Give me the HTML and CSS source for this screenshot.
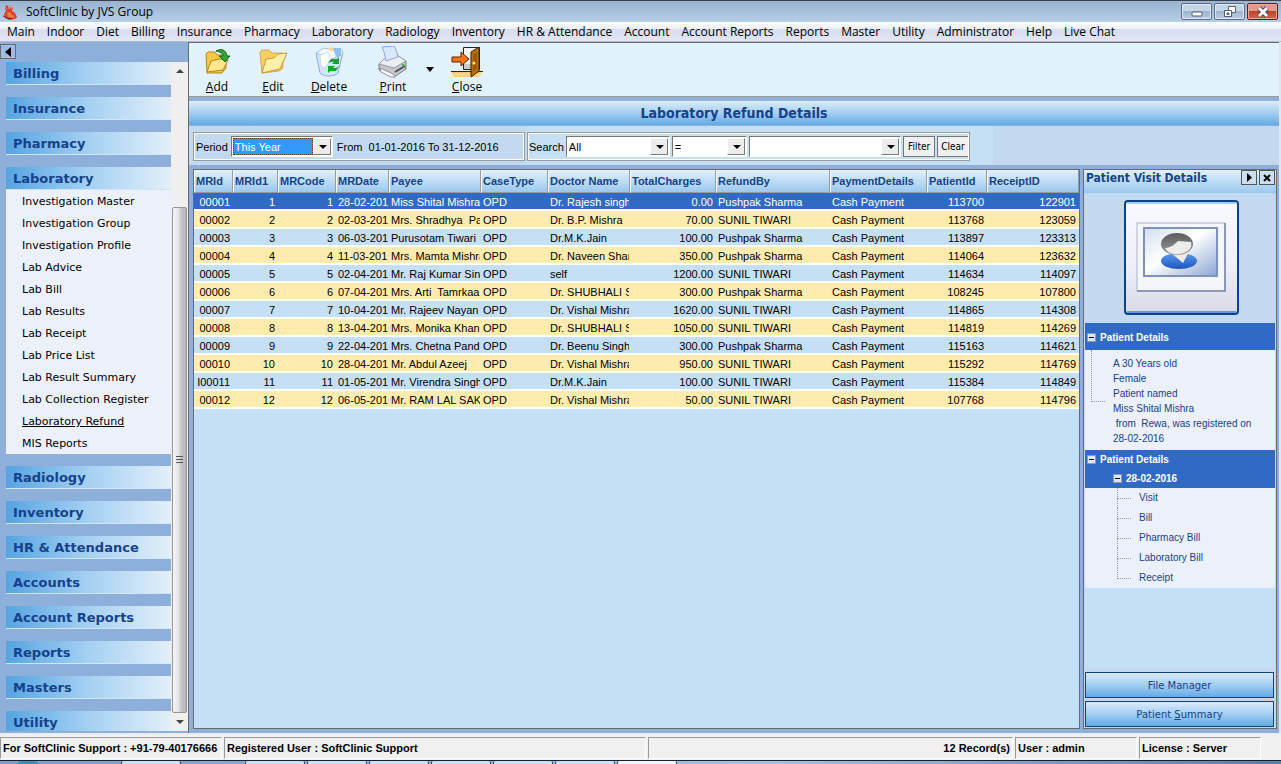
FILE: index.html
```
<!DOCTYPE html>
<html lang="en">
<head>
  <meta charset="UTF-8" />
  <title>SoftClinic by JVS Group</title>
  <link rel="stylesheet" href="styles.css">
</head>
<body>
  <header class="titlebar">
    <svg class="app-icon" width="16" height="16" viewBox="0 0 16 16">
      <path d="M4 1l2 1 1 3 2-2 2 1-1 3 3 2 2 4-2 2-6 1-4-2-1-4 2-3-1-3z" fill="#d8432a" />
      <path d="M3 3l2 2M8 1l-1 4M11 2l-2 3" stroke="#e98a72" stroke-width="1" />
      <path d="M5 9l3-1 2 3 3 1-2 2-5-1z" fill="#f47a4c" />
      <path d="M1 12l4 2 5 1" stroke="#8d1d16" fill="none" />
    </svg>
    <span class="app-name">SoftClinic by JVS Group</span>
    <div class="window-buttons">
      <button type="button" aria-label="Minimize"><svg width="12" height="12"><rect x="1" y="6" width="10" height="4" rx="1" fill="#fff" stroke="#535c6b" /></svg></button>
      <button type="button" aria-label="Restore"><svg width="12" height="12"><path d="M4.500 .5h7v6h-7z" fill="#fff" stroke="#535c6b" /><path d="M.5 4.500h7v6h-7z" fill="#fff" stroke="#535c6b" /><path d="M3 7h2v1.500h-2z" fill="#a9c0dc" stroke="#535c6b" /></svg></button>
      <button type="button" class="win-close" aria-label="Close window"><svg width="12" height="12"><path d="M2 2l8 8M10 2l-8 8" stroke="#5b3a3f" stroke-width="5" /><path d="M2 2l8 8M10 2l-8 8" stroke="#fff" stroke-width="3" /></svg></button>
    </div>
  </header>

  <nav class="menubar">
    <a href="#">Main</a>
    <a href="#">Indoor</a>
    <a href="#">Diet</a>
    <a href="#">Billing</a>
    <a href="#">Insurance</a>
    <a href="#">Pharmacy</a>
    <a href="#">Laboratory</a>
    <a href="#">Radiology</a>
    <a href="#">Inventory</a>
    <a href="#">HR &amp; Attendance</a>
    <a href="#">Account</a>
    <a href="#">Account Reports</a>
    <a href="#">Reports</a>
    <a href="#">Master</a>
    <a href="#">Utility</a>
    <a href="#">Administrator</a>
    <a href="#">Help</a>
    <a href="#">Live Chat</a>
  </nav>

  <div class="workspace">
    <aside class="sidebar">
      <button type="button" class="collapse" aria-label="Collapse sidebar"><svg width="6" height="10"><path d="M6 0v10L0 5z" /></svg></button>
      <div class="sidebar-body">
        <nav class="groups">
          <a class="group" href="#">Billing</a>
          <a class="group" href="#">Insurance</a>
          <a class="group" href="#">Pharmacy</a>
          <div class="group-open">
            <a class="group" href="#">Laboratory</a>
            <ul>
              <li><a href="#">Investigation Master</a></li>
              <li><a href="#">Investigation Group</a></li>
              <li><a href="#">Investigation Profile</a></li>
              <li><a href="#">Lab Advice</a></li>
              <li><a href="#">Lab Bill</a></li>
              <li><a href="#">Lab Results</a></li>
              <li><a href="#">Lab Receipt</a></li>
              <li><a href="#">Lab Price List</a></li>
              <li><a href="#">Lab Result Summary</a></li>
              <li><a href="#">Lab Collection Register</a></li>
              <li><a class="active" href="#">Laboratory Refund</a></li>
              <li><a href="#">MIS Reports</a></li>
            </ul>
          </div>
          <a class="group" href="#">Radiology</a>
          <a class="group" href="#">Inventory</a>
          <a class="group" href="#">HR &amp; Attendance</a>
          <a class="group" href="#">Accounts</a>
          <a class="group" href="#">Account Reports</a>
          <a class="group" href="#">Reports</a>
          <a class="group" href="#">Masters</a>
          <a class="group" href="#">Utility</a>
        </nav>
        <div class="scrollbar">
          <svg class="scroll-arrow" width="8" height="4"><path d="M0 4h8L4 0z" /></svg>
          <div class="track">
            <div class="thumb"><span></span><span></span><span></span></div>
          </div>
          <svg class="scroll-arrow" width="8" height="4"><path d="M0 0h8L4 4z" /></svg>
        </div>
      </div>
    </aside>

    <main>
      <div class="toolbar">
        <button type="button">
          <svg width="32" height="32" viewBox="0 0 32 32">
            <path d="M5 8l2-2h7l2 3h8l1 3v10l-4 5-15 0z" fill="#f5c744" stroke="#b58718" />
            <path d="M6 26l4-11 8-2 9 1-5 10z" fill="#ffe88c" stroke="#b58718" />
            <path d="M15 5c6-3 10-1 11 5h3l-5 6-6-6h4c0-3-3-4-7-5z" fill="#35a535" stroke="#17691a" />
          </svg>
          <span><u>A</u>dd</span>
        </button>
        <button type="button">
          <svg width="32" height="32" viewBox="0 0 32 32">
            <path d="M3 6l2-2h7l3 3h10l1 3v12l-4 3-17 2z" fill="#f9d063" stroke="#d9a066" />
            <path d="M5 27l4-14 8-1 4-4 9-1-7 16z" fill="#fff0a8" stroke="#c99a2e" />
          </svg>
          <span><u>E</u>dit</span>
        </button>
        <button type="button">
          <svg width="32" height="32" viewBox="0 0 32 32">
            <path d="M3 7l4 20c4 4 14 4 18 0l5-21z" fill="#cfe6fb" stroke="#84aede" />
            <path d="M3 7l8-5 9 2 9 0 1 4-11 5z" fill="#f4f9ff" stroke="#9bc4ee" />
            <path d="M20 2l8 0v8l-5 1z" fill="#8fc0f4" />
            <path d="M14 2l7-1-2 5z" fill="#ffd98a" />
            <path d="M7 9l8-3 3 7-6 9-4-2z" fill="#fff" stroke="#c7d9ee" />
            <path d="M15 17l3-4h6l2-2v7h-7l2-2h-3zM26 20l-3 5h-6l-2 2v-7h7l-2 2h3z" fill="#1f9c3b" />
          </svg>
          <span><u>D</u>elete</span>
        </button>
        <button type="button" class="print">
          <svg width="32" height="32" viewBox="0 0 32 32">
            <path d="M2 18l4-4 14-4 9 5v8l-12 8-15-7z" fill="#c4c7cd" stroke="#777c85" />
            <path d="M2 18l5-5 13-4 9 6-12 7z" fill="#eceef1" stroke="#979ba3" />
            <path d="M5 1l12-1c2 3 3 7 4 11l-12 4c-1-6-2-10-4-14z" fill="#dbe8ff" stroke="#88a7df" />
            <path d="M3 22l13 6 2 3-4 0-10-5z" fill="#fff" stroke="#8b9098" />
            <path d="M18 26l10-6" stroke="#4c5058" stroke-width="2" />
            <path d="M25 18h2v3h-2z" fill="#40b040" />
          </svg>
          <span><u>P</u>rint</span>
        </button>
        <button type="button" class="drop" aria-label="Print options"><svg width="8" height="5"><path d="M0 0h8L4 5z" /></svg></button>
        <button type="button">
          <svg width="32" height="32" viewBox="0 0 32 32">
            <path d="M0 25h32l-4 6h-26z" fill="#ffd98e" />
            <path d="M2 27h28M4 30h24" stroke="#f2a950" stroke-dasharray="2 2" />
            <path d="M0 25.500h32" stroke="#222" />
            <path d="M12.500 1.500h16v22h-16z" fill="#f4f4f4" stroke="#222" />
            <path d="M13 18h7v5h-7z" fill="#c9c9c9" />
            <path d="M20 6l8-5v24l-8 6z" fill="#b9720f" stroke="#3b2504" />
            <path d="M22 8l4-2v17l-4 3z" fill="#9a5a08" />
            <circle cx="23" cy="17" r="1.500" fill="#ffe27a" />
            <path d="M1 11h9V6l8 7-8 7v-4H1z" fill="#ff7414" stroke="#5b2500" />
          </svg>
          <span><u>C</u>lose</span>
        </button>
      </div>

      <h1>Laboratory Refund Details</h1>

      <form class="filters">
        <div class="filter-box period">
          <label for="period">Period</label>
          <span class="combo"><select id="period"><option>This Year</option></select></span>
          <span class="range">From&nbsp; 01-01-2016 To 31-12-2016</span>
        </div>
        <div class="filter-area">
          <div class="filter-box search">
            <label for="field">Search</label>
            <span class="combo field"><select id="field"><option>All</option></select></span>
            <span class="combo operator"><select aria-label="Operator"><option>=</option></select></span>
            <span class="combo value"><select aria-label="Value"><option></option></select></span>
            <button type="button">Filter</button>
            <button type="button">Clear</button>
          </div>
        </div>
      </form>

      <div class="content">
        <section class="grid">
          <table>
            <colgroup>
              <col class="c-id"><col class="c-id1"><col class="c-code"><col class="c-date"><col class="c-payee"><col class="c-case"><col class="c-doctor"><col class="c-total"><col class="c-refund"><col class="c-payment"><col class="c-patient"><col>
            </colgroup>
            <thead>
              <tr><th>MRId</th><th>MRId1</th><th>MRCode</th><th>MRDate</th><th>Payee</th><th>CaseType</th><th>Doctor Name</th><th>TotalCharges</th><th>RefundBy</th><th>PaymentDetails</th><th>PatientId</th><th>ReceiptID</th></tr>
            </thead>
            <tbody>
              <tr class="selected"><td class="num">00001</td><td class="num">1</td><td class="num">1</td><td>28-02-201</td><td>Miss Shital Mishra</td><td>OPD</td><td>Dr. Rajesh singh</td><td class="num">0.00</td><td>Pushpak Sharma</td><td>Cash Payment</td><td class="num">113700</td><td class="num">122901</td></tr>
              <tr><td class="num">00002</td><td class="num">2</td><td class="num">2</td><td>02-03-201</td><td>Mrs. Shradhya&nbsp; Pa</td><td>OPD</td><td>Dr. B.P. Mishra</td><td class="num">70.00</td><td>SUNIL TIWARI</td><td>Cash Payment</td><td class="num">113768</td><td class="num">123059</td></tr>
              <tr><td class="num">00003</td><td class="num">3</td><td class="num">3</td><td>06-03-201</td><td>Purusotam Tiwari</td><td>OPD</td><td>Dr.M.K.Jain</td><td class="num">100.00</td><td>Pushpak Sharma</td><td>Cash Payment</td><td class="num">113897</td><td class="num">123313</td></tr>
              <tr><td class="num">00004</td><td class="num">4</td><td class="num">4</td><td>11-03-201</td><td>Mrs. Mamta Mishra</td><td>OPD</td><td>Dr. Naveen Shar</td><td class="num">350.00</td><td>Pushpak Sharma</td><td>Cash Payment</td><td class="num">114064</td><td class="num">123632</td></tr>
              <tr><td class="num">00005</td><td class="num">5</td><td class="num">5</td><td>02-04-201</td><td>Mr. Raj Kumar Sing</td><td>OPD</td><td>self</td><td class="num">1200.00</td><td>SUNIL TIWARI</td><td>Cash Payment</td><td class="num">114634</td><td class="num">114097</td></tr>
              <tr><td class="num">00006</td><td class="num">6</td><td class="num">6</td><td>07-04-201</td><td>Mrs. Arti&nbsp; Tamrkaa</td><td>OPD</td><td>Dr. SHUBHALI S</td><td class="num">300.00</td><td>Pushpak Sharma</td><td>Cash Payment</td><td class="num">108245</td><td class="num">107800</td></tr>
              <tr><td class="num">00007</td><td class="num">7</td><td class="num">7</td><td>10-04-201</td><td>Mr. Rajeev Nayan</td><td>OPD</td><td>Dr. Vishal Mishra</td><td class="num">1620.00</td><td>SUNIL TIWARI</td><td>Cash Payment</td><td class="num">114865</td><td class="num">114308</td></tr>
              <tr><td class="num">00008</td><td class="num">8</td><td class="num">8</td><td>13-04-201</td><td>Mrs. Monika Khan</td><td>OPD</td><td>Dr. SHUBHALI S</td><td class="num">1050.00</td><td>SUNIL TIWARI</td><td>Cash Payment</td><td class="num">114819</td><td class="num">114269</td></tr>
              <tr><td class="num">00009</td><td class="num">9</td><td class="num">9</td><td>22-04-201</td><td>Mrs. Chetna Pand</td><td>OPD</td><td>Dr. Beenu Singh</td><td class="num">300.00</td><td>Pushpak Sharma</td><td>Cash Payment</td><td class="num">115163</td><td class="num">114621</td></tr>
              <tr><td class="num">00010</td><td class="num">10</td><td class="num">10</td><td>28-04-201</td><td>Mr. Abdul Azeej</td><td>OPD</td><td>Dr. Vishal Mishra</td><td class="num">950.00</td><td>SUNIL TIWARI</td><td>Cash Payment</td><td class="num">115292</td><td class="num">114769</td></tr>
              <tr><td class="num">I00011</td><td class="num">11</td><td class="num">11</td><td>01-05-201</td><td>Mr. Virendra Singh</td><td>OPD</td><td>Dr.M.K.Jain</td><td class="num">100.00</td><td>SUNIL TIWARI</td><td>Cash Payment</td><td class="num">115384</td><td class="num">114849</td></tr>
              <tr><td class="num">00012</td><td class="num">12</td><td class="num">12</td><td>06-05-201</td><td>Mr. RAM LAL SAK</td><td>OPD</td><td>Dr. Vishal Mishra</td><td class="num">50.00</td><td>SUNIL TIWARI</td><td>Cash Payment</td><td class="num">107768</td><td class="num">114796</td></tr>
            </tbody>
          </table>
        </section>

        <aside class="visit">
          <div class="visit-head">
            <h2>Patient Visit Details</h2>
            <button type="button" aria-label="Collapse panel"><svg width="5" height="9"><path d="M0 0v9l5-4.500z" /></svg></button>
            <button type="button" aria-label="Close panel"><svg width="8" height="8"><path d="M1 1l6 6M7 1l-6 6" stroke="#000" stroke-width="2" /></svg></button>
          </div>
          <div class="photo">
            <svg width="115" height="115" viewBox="0 0 115 115">
              <defs>
                <linearGradient id="card" x1="0" y1="0" x2="0" y2="1"><stop offset="0" stop-color="#f8f9ff" /><stop offset=".6" stop-color="#eeeef7" /><stop offset="1" stop-color="#d9d9e8" /></linearGradient>
                <linearGradient id="pic" x1="0" y1="0" x2="1" y2="1"><stop offset="0" stop-color="#d5dff0" /><stop offset=".45" stop-color="#fff" /><stop offset="1" stop-color="#8ba4d4" /></linearGradient>
                <linearGradient id="hair" x1="0" y1="0" x2="0" y2="1"><stop offset="0" stop-color="#5b5b5b" /><stop offset="1" stop-color="#9a9a9a" /></linearGradient>
                <linearGradient id="shirt" x1="0" y1="0" x2="0" y2="1"><stop offset="0" stop-color="#5c9bf0" /><stop offset="1" stop-color="#1c55bd" /></linearGradient>
              </defs>
              <rect x="1" y="1" width="113" height="113" rx="3" fill="url(#card)" stroke="#0b4384" stroke-width="2" />
              <path d="M3 3h109" stroke="#9fd0fb" stroke-width="2" />
              <path d="M3 112h109" stroke="#6f8ee8" stroke-width="2" />
              <rect x="13" y="23" width="88" height="68" fill="#f5f6fb" stroke="#a9b6cd" />
              <path d="M101 23v68H13" fill="none" stroke="#8798ba" stroke-width="2" />
              <rect x="20" y="28" width="73" height="48" fill="url(#pic)" stroke="#7f93b8" stroke-width="2" />
              <ellipse cx="55" cy="61" rx="18" ry="8" fill="url(#shirt)" />
              <path d="M47 53l12 10 6-11z" fill="#f3e9e8" />
              <ellipse cx="53" cy="44" rx="16" ry="11" fill="url(#hair)" />
              <path d="M41 48c5 0 9-3 13-7l13 1c2 7-4 11-12 12-7 1-12-2-14-6z" fill="#ededed" />
            </svg>
          </div>
          <div class="info-head"><span class="box"></span>Patient Details</div>
          <p class="info">
            A 30 Years old<br>
            Female<br>
            Patient named<br>
            Miss Shital Mishra<br>
            &nbsp;from&nbsp; Rewa, was registered on<br>
            28-02-2016
          </p>
          <div class="tree-head">
            <div><span class="box"></span>Patient Details</div>
            <div class="date"><span class="box"></span>28-02-2016</div>
          </div>
          <ul class="tree">
            <li><a href="#">Visit</a></li>
            <li><a href="#">Bill</a></li>
            <li><a href="#">Pharmacy Bill</a></li>
            <li><a href="#">Laboratory Bill</a></li>
            <li><a href="#">Receipt</a></li>
          </ul>
          <div class="filler"></div>
          <div class="visit-buttons">
            <button type="button">File Manager</button>
            <button type="button">Patient <u>S</u>ummary</button>
          </div>
        </aside>
      </div>
    </main>
  </div>

  <footer class="statusbar">
    <span class="s-support">For SoftClinic Support : +91-79-40176666</span>
    <span class="s-user">Registered User : SoftClinic Support</span>
    <span class="s-records">12 Record(s)</span>
    <span class="s-login">User : admin</span>
    <span class="s-licence">License : Server</span>
  </footer>
  <div class="taskbar">
    <i class="orb"></i>
    <i class="task first"></i>
    <i class="task"></i>
    <i class="task"></i>
    <i class="task"></i>
    <i class="task"></i>
    <i class="task"></i>
    <i class="task"></i>
    <i class="task current"></i>
  </div>
</body>
</html>
```
FILE: styles.css
```
:root {
  --frame: #8fafdb;
  --navy: #15428b;
  --pale: #c5dff5;
  --panel: #c3d9ef;
  --list: #ecf0fb;
  --select: #316ac5;
  --line: #6b6b6b;
  --ui: "Open Sans", "Noto Sans", sans-serif;
  --grid: "Liberation Sans", Arial, sans-serif;
}

* {
  box-sizing: border-box;
}

body {
  margin: 0;
  height: 100vh;
  display: flex;
  flex-direction: column;
  overflow: hidden;
  background: var(--frame);
  font-family: var(--ui);
  font-size: 12px;
  color: #000;
}

a {
  color: inherit;
  text-decoration: none;
}

ul {
  list-style: none;
  margin: 0;
  padding: 0;
}

button {
  font: inherit;
  color: inherit;
  padding: 0;
  margin: 0;
}

/* title bar and menu */

.titlebar {
  display: flex;
  align-items: center;
  height: 22px;
  padding: 0 3px 0 2px;
  border-top: 1px solid #3a3f49;
  background: linear-gradient(#98b4d2, #b6cde6);
}

.app-name {
  margin-left: 8px;
  line-height: 20px;
}

.window-buttons {
  display: flex;
  gap: 2px;
  margin-left: auto;
}

.window-buttons button {
  display: flex;
  align-items: center;
  justify-content: center;
  width: 31px;
  height: 17px;
  border: 1px solid #5c6c88;
  border-radius: 2px;
  box-shadow: inset 0 0 0 1px #dde8f4;
  background: linear-gradient(#c5d5e8 50%, #9db4d0 50%, #b9cce2);
}

.window-buttons .win-close {
  border-color: #5a1f26;
  box-shadow: inset 0 0 0 1px #eba99c;
  background: linear-gradient(#e3998b 50%, #c0402a 50%, #d4674f);
}

.menubar {
  display: flex;
  gap: 12px;
  height: 20px;
  padding-left: 7px;
  line-height: 20px;
  white-space: nowrap;
  border-bottom: 1px solid #b3bac9;
  background: linear-gradient(#fff, #eceff8 35%, #d7dcf0 40%, #e2e6f6);
}

.workspace {
  flex: 1;
  min-height: 0;
  display: flex;
  border-bottom: 2px solid #e9eef8;
}

/* sidebar */

.sidebar {
  width: 188px;
  display: flex;
  flex-direction: column;
  padding: 2px 0 2px;
}

.collapse {
  display: flex;
  align-items: center;
  justify-content: center;
  width: 16px;
  height: 15px;
  margin-bottom: 3px;
  border: 1px solid var(--line);
  background: #9dbbe4;
}

.sidebar-body {
  flex: 1;
  min-height: 0;
  display: flex;
}

.groups {
  flex: 1;
  display: flex;
  flex-direction: column;
  gap: 12px;
  padding-left: 6px;
  overflow: hidden;
  font-family: "DejaVu Sans", Verdana, sans-serif;
}

.group {
  display: block;
  flex: none;
  height: 23px;
  padding-left: 7px;
  line-height: 23px;
  font-size: 13px;
  font-weight: bold;
  color: var(--navy);
  border-bottom: 1px solid #cfe6f9;
  background: linear-gradient(90deg, #56a4e1, #a5d0f2 50%, #e3eff9);
}

.group-open {
  flex: none;
}

.group-open ul {
  background: var(--list);
}

.group-open li {
  height: 22px;
  padding-left: 16px;
  line-height: 23px;
  font-size: 11px;
}

.group-open .active {
  text-decoration: underline;
}

.scrollbar {
  width: 17px;
  display: flex;
  flex-direction: column;
  align-items: center;
  gap: 7px;
  padding: 7px 0;
  background: #efefef;
}

.scroll-arrow {
  flex: none;
  fill: #444;
}

.track {
  flex: 1;
  width: 100%;
  display: flex;
  flex-direction: column;
  justify-content: flex-end;
}

.thumb {
  height: 80%;
  display: flex;
  flex-direction: column;
  align-items: center;
  justify-content: center;
  gap: 2px;
  margin: 0 1px;
  border: 1px solid #969696;
  border-radius: 2px;
  background: linear-gradient(90deg, #f5f5f5, #e4e4e8 45%, #cbcbd0 55%, #b4b4b8);
}

.thumb span {
  width: 7px;
  height: 1px;
  background: #555;
}

/* toolbar */

main {
  flex: 1;
  min-width: 0;
  display: flex;
  flex-direction: column;
  border-left: 1px solid var(--line);
  border-right: 2px solid #dfe7f3;
}

.toolbar {
  display: flex;
  height: 55px;
  border-top: 1px solid var(--line);
  border-bottom: 1px solid #9a9a9a;
  background: #e1f2fc;
}

.toolbar button {
  display: flex;
  flex-direction: column;
  align-items: center;
  width: 56px;
  padding-top: 3px;
  border: 0;
  background: none;
  line-height: 17px;
}

.toolbar .print {
  margin-left: 8px;
}

.toolbar .drop {
  width: 18px;
  padding-top: 24px;
}

h1 {
  flex: none;
  height: 25px;
  margin: 4px 0 0;
  line-height: 24px;
  text-align: center;
  font-family: "DejaVu Sans Condensed", "DejaVu Sans", sans-serif;
  font-size: 14px;
  color: var(--navy);
  border-bottom: 1px solid var(--frame);
  background: linear-gradient(#dcecfa, #a4cef0 50%, #64aae4);
}

/* filters */

.filters {
  display: flex;
  height: 39px;
  padding-left: 4px;
  background: var(--panel);
}

.filter-box {
  display: flex;
  align-items: center;
  height: 29px;
  margin-top: 6px;
  padding-left: 2px;
  border: 1px solid #9a9a9a;
  outline: 1px solid #fff;
  outline-offset: -2px;
  font-family: var(--grid);
  font-size: 11px;
}

.period {
  width: 332px;
}

.period .combo {
  width: 102px;
  margin: 0 4px 0 3px;
}

.filter-area {
  width: 466px;
  margin-left: 2px;
  background: var(--pale);
}

.search {
  width: 443px;
  gap: 2px;
  padding-left: 1px;
}

.combo {
  position: relative;
  display: flex;
  height: 21px;
  padding: 1px 19px 1px 1px;
  border: 1px solid #777;
  border-right-color: #fff;
  border-bottom-color: #fff;
  background: #fff;
}

.combo select {
  flex: 1;
  min-width: 0;
  padding: 0 1px;
  appearance: none;
  border: 0;
  border-radius: 0;
  background: #fff;
  font-family: var(--grid);
  font-size: 11px;
}

.period .combo select {
  color: #fff;
  background: #3399ff;
  border: 1px dotted #5b3a10;
}

/* drop-down button drawn over the right end of the box */
.combo::before {
  content: "";
  position: absolute;
  top: 1px;
  right: 1px;
  bottom: 1px;
  width: 16px;
  border: 1px solid #fff;
  border-right-color: #777;
  border-bottom-color: #777;
  background: #ececec;
  pointer-events: none;
}

.combo::after {
  content: "";
  position: absolute;
  top: 8px;
  right: 5px;
  border: 4px solid transparent;
  border-top-color: #000;
  border-bottom: 0;
  pointer-events: none;
}

.field {
  width: 104px;
}

.operator {
  width: 75px;
}

.value {
  width: 153px;
}

.search button {
  width: 32px;
  height: 21px;
  border: 1px solid #777;
  background: #f0f0f0;
  font-family: "DejaVu Sans Condensed", "DejaVu Sans", sans-serif;
  font-size: 10px;
}

/* records */

.content {
  flex: 1;
  min-height: 0;
  display: flex;
  gap: 3px;
  padding: 4px 2px 4px 4px;
}

.grid {
  flex: 1;
  min-width: 0;
  border: 1px solid var(--line);
  background: var(--pale);
}

.grid table {
  width: 100%;
  table-layout: fixed;
  border-spacing: 0;
  font-family: var(--grid);
  font-size: 11px;
}

.c-id { width: 39px; }
.c-id1 { width: 45px; }
.c-code { width: 58px; }
.c-date { width: 53px; }
.c-payee { width: 92px; }
.c-case { width: 67px; }
.c-doctor { width: 82px; }
.c-total { width: 86px; }
.c-refund { width: 114px; }
.c-payment { width: 97px; }
.c-patient { width: 60px; }

th {
  height: 23px;
  padding: 0 0 0 1px;
  text-align: left;
  white-space: nowrap;
  color: var(--navy);
  border-right: 1px solid #9a9a9a;
  border-bottom: 1px solid #9a9a9a;
  border-left: 1px solid #f3f8fd;
  background: linear-gradient(#e2f0fb, #bfdcf4 50%, #9ac8ee);
}

td {
  height: 18px;
  padding: 0 0 0 2px;
  line-height: 18px;
  white-space: nowrap;
  overflow: hidden;
  border-right: 1px solid transparent;
}

tbody tr {
  background: linear-gradient(#fff, #fff) bottom / 100% 2px no-repeat var(--pale);
}

tbody tr:nth-child(even) {
  background-color: #feecaf;
}

tbody .selected {
  color: #fff;
  background-color: var(--select);
}

td.num {
  padding-right: 2px;
  text-align: right;
}

/* patient visit panel */

.visit {
  width: 194px;
  display: flex;
  flex-direction: column;
  border: 1px solid var(--line);
  background: var(--panel);
  font-family: var(--grid);
  font-size: 10px;
  color: var(--navy);
}

.visit-head {
  display: flex;
  gap: 2px;
  height: 23px;
  padding: 0 1px 0 2px;
  background: linear-gradient(#e2f0fb, #9ac8ee);
}

.visit-head h2 {
  flex: 1;
  margin: 0;
  line-height: 17px;
  font-family: "DejaVu Sans Condensed", "DejaVu Sans", sans-serif;
  font-size: 12px;
  white-space: nowrap;
}

.visit-head button {
  display: flex;
  align-items: center;
  justify-content: center;
  width: 16px;
  height: 15px;
  border: 1px solid #555;
  background: #c9dff4;
}

.photo {
  padding: 7px 0 8px 40px;
  line-height: 0;
}

.info-head,
.tree-head,
.info,
.tree {
  margin: 0 1px;
}

.info-head,
.tree-head {
  color: #fff;
  font-weight: bold;
  background: var(--select);
}

.info-head {
  padding: 5px 0 3px 2px;
  line-height: 19px;
}

.tree-head {
  padding-left: 2px;
  line-height: 19px;
}

.info-head,
.tree-head div {
  display: flex;
  align-items: center;
  gap: 4px;
}

.tree-head .date {
  padding-left: 26px;
}

.box {
  width: 9px;
  height: 9px;
  border: 1px solid #8a9ab5;
  background: linear-gradient(#000, #000) center / 5px 1px no-repeat #dce8f8;
}

.info {
  position: relative;
  padding: 6px 0 4px 28px;
  line-height: 15px;
  background: var(--list);
}

.info::before {
  content: "";
  position: absolute;
  top: 0;
  left: 6px;
  width: 13px;
  height: 51px;
  border: dotted #9a9a9a;
  border-width: 0 0 1px 1px;
}

.tree {
  background: var(--list);
}

.tree li {
  position: relative;
  height: 20px;
  padding-left: 54px;
  line-height: 20px;
}

.tree li::before {
  content: "";
  position: absolute;
  top: 0;
  left: 32px;
  width: 13px;
  height: 10px;
  border: dotted #9a9a9a;
  border-width: 0 0 1px 1px;
}

.tree li:not(:last-child)::after {
  content: "";
  position: absolute;
  top: 10px;
  left: 32px;
  height: 10px;
  border-left: 1px dotted #9a9a9a;
}

.filler {
  flex: 1;
  margin: 0 1px;
  background: var(--pale);
}

.visit-buttons {
  display: flex;
  flex-direction: column;
  gap: 3px;
  padding: 4px 2px 1px 1px;
}

.visit-buttons button {
  height: 26px;
  border: 1px solid #0b4384;
  background: linear-gradient(#d8eafa, #a4cef0 50%, #64aae4);
  font-family: "DejaVu Sans", Verdana, sans-serif;
  font-size: 10px;
}

/* status bar */

.statusbar {
  display: flex;
  gap: 2px;
  height: 25px;
  padding: 2px 20px 1px 0;
  background: #f0f0f0;
  font-family: var(--grid);
  font-size: 11px;
  font-weight: bold;
}

.statusbar span {
  padding: 0 2px;
  line-height: 20px;
  white-space: nowrap;
  border: 1px solid #fff;
  border-top-color: #9a9a9a;
  border-left-color: #9a9a9a;
}

.s-support { width: 222px; }
.s-user { width: 422px; }
.s-records { flex: 1; text-align: right; }
.s-login { width: 122px; }
.s-licence { width: 122px; }

.taskbar {
  display: flex;
  gap: 2px;
  height: 4px;
  border-top: 1px solid #16202e;
  background: linear-gradient(90deg, #7e9cc4, #a5c0e0 60%, #5f7ea3);
}

.orb {
  width: 20px;
  margin-left: 18px;
  border-radius: 10px 10px 0 0;
  background: #3d8fb8;
}

.task {
  width: 60px;
  border: 1px solid #2c3e57;
  border-width: 0 1px;
  border-radius: 2px 2px 0 0;
  background: #cfdff2;
}

.task.first {
  margin: 0 62px 0 81px;
}

.task.current {
  background: #f2f7fd;
}
```
